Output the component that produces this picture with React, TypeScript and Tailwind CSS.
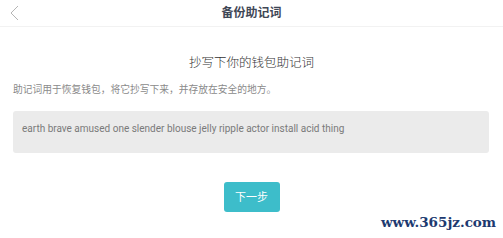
import React from 'react';

const words = 'earth brave amused one slender blouse jelly ripple actor install acid thing';

const App: React.FC = () => {
  return (
    <div
      className="relative w-[503px] h-[238px] bg-white overflow-hidden"
      style={{ fontFamily: 'Roboto, "Noto Sans CJK SC", sans-serif' }}
    >
      {/* Header */}
      <header className="relative h-[27px] flex items-center justify-center border-b border-[#f2f2f2] bg-white">
        <svg className="absolute left-[9px] top-[5px]" width="11" height="16" viewBox="0 0 11 16">
          <path d="M9 1 L2 8 L9 15" fill="none" stroke="#b5b5b5" strokeWidth="1" />
        </svg>
        <h1 className="text-[12px] font-semibold text-[#3f4756] leading-none">备份助记词</h1>
      </header>

      {/* Body */}
      <div className="px-[13px]">
        <h2 className="mt-[30px] text-center text-[12.5px] font-light text-[#333] leading-none">抄写下你的钱包助记词</h2>
        <p className="mt-[15px] text-[9.75px] text-[#8a8a8a] leading-none">
          助记词用于恢复钱包，将它抄写下来，并存放在安全的地方。
        </p>

        <div className="mt-[17px] h-[42px] w-[476px] rounded-[3px] bg-[#ebebeb] px-[9px] pt-[11px]">
          <p className="text-[10px] text-[#7a7a7a] leading-[14px]">{words}</p>
        </div>

        <div className="mt-[29px] flex justify-center">
          <button className="w-[56px] h-[30px] rounded-[3px] bg-[#3dbdca] text-white text-[11px] leading-none">
            下一步
          </button>
        </div>
      </div>

      {/* Watermark */}
      <span
        className="absolute left-[381px] top-[216px] text-[13.5px] font-bold text-[#1d3a70] leading-none"
        style={{ fontFamily: '"DejaVu Serif", serif' }}
      >
        www.365jz.com
      </span>
    </div>
  );
};

export default App;
